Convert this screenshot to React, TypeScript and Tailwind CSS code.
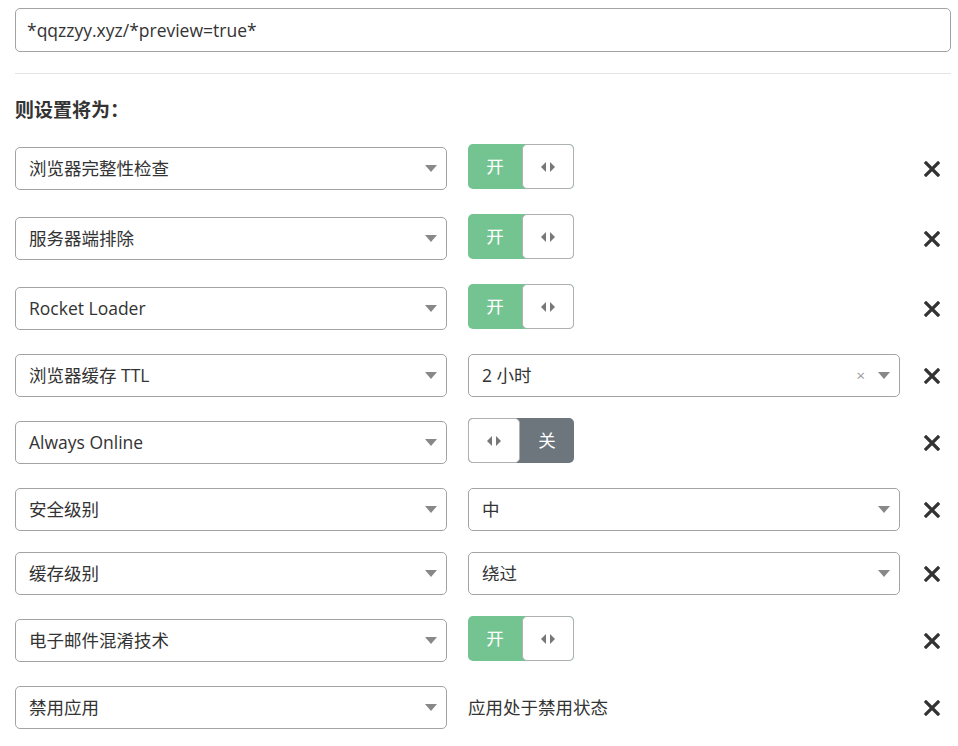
import type { ReactNode } from "react";

const FONT = '"Open Sans", "Noto Sans CJK SC", sans-serif';

type Value =
  | { kind: "on" }
  | { kind: "off" }
  | { kind: "select"; label: string; clearable?: boolean }
  | { kind: "text"; label: string };

const RULES: { setting: string; value: Value }[] = [
  { setting: "浏览器完整性检查", value: { kind: "on" } },
  { setting: "服务器端排除", value: { kind: "on" } },
  { setting: "Rocket Loader", value: { kind: "on" } },
  { setting: "浏览器缓存 TTL", value: { kind: "select", label: "2 小时", clearable: true } },
  { setting: "Always Online", value: { kind: "off" } },
  { setting: "安全级别", value: { kind: "select", label: "中" } },
  { setting: "缓存级别", value: { kind: "select", label: "绕过" } },
  { setting: "电子邮件混淆技术", value: { kind: "on" } },
  { setting: "禁用应用", value: { kind: "text", label: "应用处于禁用状态" } },
];

function Caret() {
  return (
    <svg width="12" height="7" viewBox="0 0 12 7" className="shrink-0">
      <path d="M0 0 H12 L6 7 Z" fill="#888" />
    </svg>
  );
}

function Select({ children, clearable }: { children: ReactNode; clearable?: boolean }) {
  return (
    <div className="flex h-[43px] w-[432px] shrink-0 items-center rounded-[5px] border border-[#a3a3a3] bg-white pl-[13px] pr-[9px]">
      <span className="flex-1 text-[17.5px] text-[#333]">{children}</span>
      {clearable && <span className="mr-[13px] text-[15px] leading-none text-[#999]">×</span>}
      <Caret />
    </div>
  );
}

function Arrows() {
  return (
    <svg width="14" height="10" viewBox="0 0 14 10">
      <path d="M5 0 V10 L0 5 Z" fill="#777" />
      <path d="M9 0 V10 L14 5 Z" fill="#777" />
    </svg>
  );
}

function Toggle({ on }: { on: boolean }) {
  const knob = (
    <div className="flex h-full w-[52px] items-center justify-center rounded-[5px] border border-[#b0b0b0] bg-white">
      <Arrows />
    </div>
  );
  return on ? (
    <div className="flex h-[45px] w-[106px] shrink-0 rounded-[5px] bg-[#74c492]">
      <div className="flex w-[54px] items-center justify-center text-[17.5px] text-white">开</div>
      {knob}
    </div>
  ) : (
    <div className="flex h-[45px] w-[106px] shrink-0 rounded-[5px] bg-[#6d757d]">
      {knob}
      <div className="flex w-[54px] items-center justify-center text-[17.5px] text-white">关</div>
    </div>
  );
}

function RemoveIcon() {
  return (
    <svg width="16" height="16" viewBox="0 0 16 16">
      <path d="M2 2 L14 14 M14 2 L2 14" stroke="#333" strokeWidth="3.2" strokeLinecap="square" />
    </svg>
  );
}

function Row({ setting, value }: { setting: string; value: Value }) {
  const isToggle = value.kind === "on" || value.kind === "off";
  return (
    <div className="flex items-start">
      <div className={isToggle ? "mt-[3px] mb-[3px]" : ""}>
        <Select>{setting}</Select>
      </div>
      <div className={isToggle ? "ml-[21px] w-[432px]" : "ml-[21px] flex h-[43px] w-[432px] items-center"}>
        {value.kind === "on" && <Toggle on />}
        {value.kind === "off" && <Toggle on={false} />}
        {value.kind === "select" && <Select clearable={value.clearable}>{value.label}</Select>}
        {value.kind === "text" && <span className="text-[17.5px] text-[#333]">{value.label}</span>}
      </div>
      <div
        className={
          isToggle
            ? "flex h-[49px] flex-1 items-center justify-end pr-[11px]"
            : "flex h-[43px] flex-1 items-center justify-end pr-[11px]"
        }
      >
        <RemoveIcon />
      </div>
    </div>
  );
}

export default function App() {
  return (
    <div className="min-h-[746px] w-[958px] bg-white pl-[15px] pr-[7px] pt-[8px]" style={{ fontFamily: FONT }}>
      <div className="flex h-[44px] items-center rounded-[5px] border border-[#a3a3a3] px-[11px] text-[17.5px] text-[#333]">
        *qqzzyy.xyz/*preview=true*
      </div>
      <div className="mt-[21px] border-t border-[#e3e3e3]" />
      <h3 className="mt-[23px] text-[19px] font-bold leading-[26px] text-[#333]">则设置将为：</h3>
      <div className="mt-[21px] flex flex-col gap-[21px]">
        {RULES.map((r) => (
          <Row key={r.setting} setting={r.setting} value={r.value} />
        ))}
      </div>
    </div>
  );
}
